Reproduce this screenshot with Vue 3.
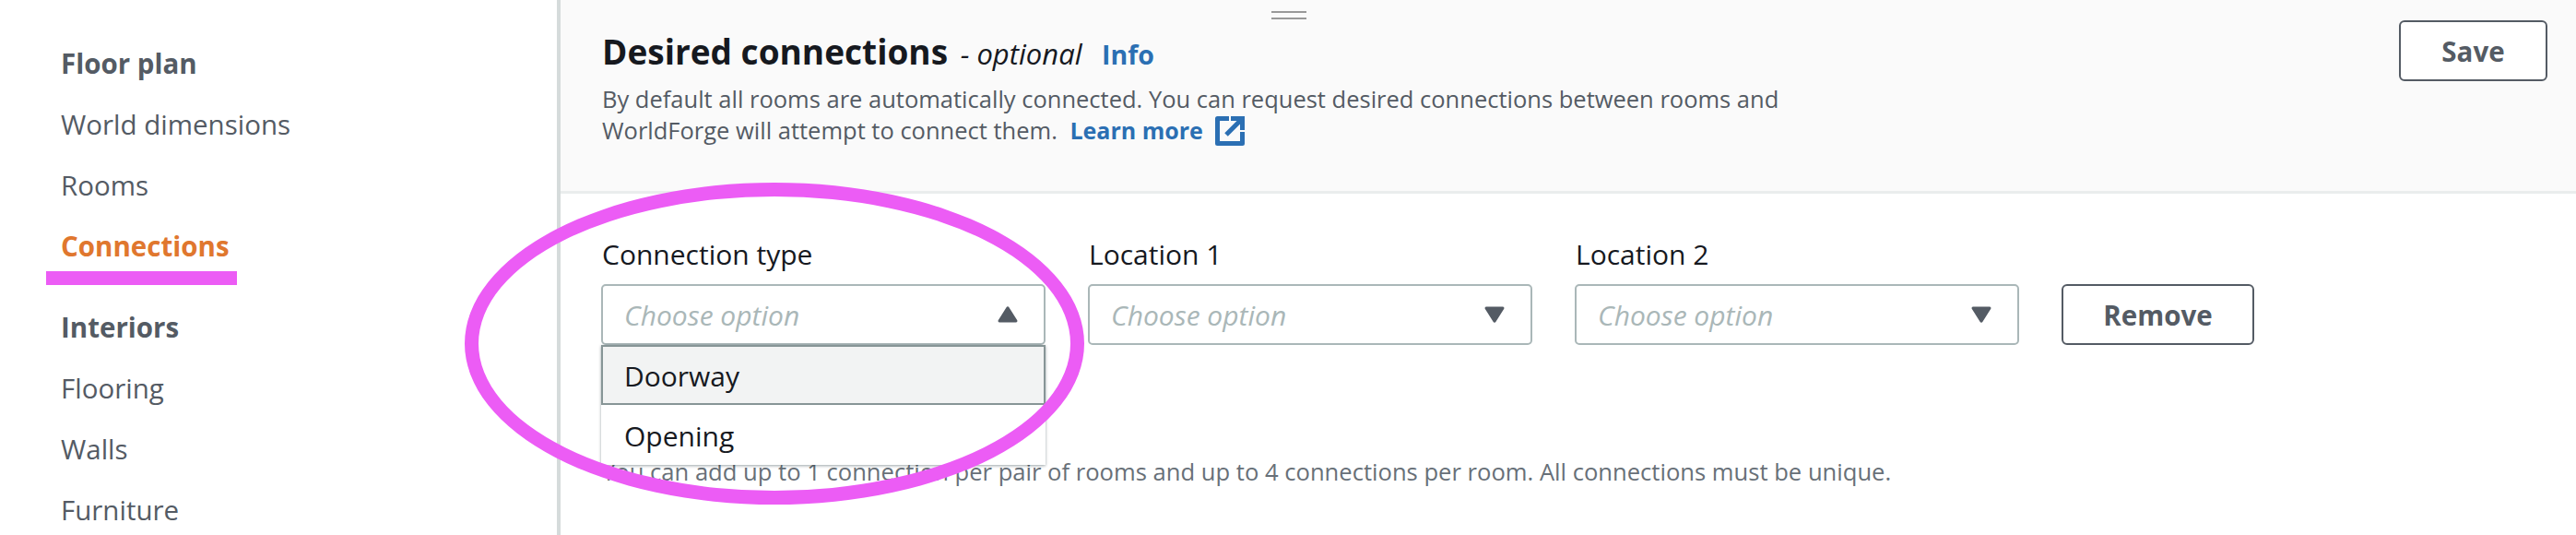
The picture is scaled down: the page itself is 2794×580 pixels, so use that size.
<script setup>
const sections = [
  { title: 'Floor plan', items: ['World dimensions', 'Rooms', 'Connections'] },
  { title: 'Interiors', items: ['Flooring', 'Walls', 'Furniture'] }
]
const fields = [
  { label: 'Connection type', open: true },
  { label: 'Location 1', open: false },
  { label: 'Location 2', open: false }
]
</script>

<template>
  <div class="page">
    <aside class="side">
      <section v-for="s in sections" :key="s.title" class="group">
        <div class="nav title">{{ s.title }}</div>
        <div v-for="i in s.items" :key="i" class="nav" :class="{ active: i === 'Connections' }">
          {{ i }}
          <span v-if="i === 'Connections'" class="underline"></span>
        </div>
      </section>
    </aside>
    <main class="main">
      <span class="grip"></span>
      <header class="head">
        <div class="head-text">
          <h1>Desired connections <i>- optional</i> <a class="info">Info</a></h1>
          <p>By default all rooms are automatically connected. You can request desired connections between rooms and<br>WorldForge will attempt to connect them. <a class="learn">Learn more
            <svg class="ext" viewBox="0 0 32 32" fill="none" stroke="#2b6fb3" stroke-width="5"><path d="M15 2.500H2.500v27h27V17" stroke-linejoin="round"/><path d="M17 2.500h12.500V15M29.500 2.500 12 20"/></svg></a></p>
        </div>
        <button class="btn save">Save</button>
      </header>
      <div class="form">
        <div class="row">
          <div v-for="f in fields" :key="f.label" class="field">
            <label>{{ f.label }}</label>
            <div class="select">
              <em>Choose option</em>
              <svg class="caret" :class="{ up: f.open }" viewBox="0 0 24 20"><path d="M3 1.500h18a1.500 1.500 0 0 1 1.300 2.200L13.300 18a1.500 1.500 0 0 1-2.600 0L1.700 3.700A1.500 1.500 0 0 1 3 1.500z" fill="#545b64"/></svg>
              <ul v-if="f.open" class="menu">
                <li class="hover">Doorway</li>
                <li>Opening</li>
              </ul>
            </div>
          </div>
          <button class="btn remove">Remove</button>
        </div>
        <p class="help">You can add up to 1 connection per pair of rooms and up to 4 connections per room. All connections must be unique.</p>
      </div>
    </main>
    <span class="ring"></span>
  </div>
</template>

<style>
html, body { margin: 0; background: #fff; overflow: hidden; }
</style>

<style scoped>
.page { position: relative; display: flex; width: 2794px; height: 580px; overflow: hidden; font-family: "Open Sans", sans-serif; color: #16191f; }
.side { width: 604px; flex: none; padding-top: 36px; box-sizing: border-box; }
.group { margin-bottom: 22px; }
.nav { position: relative; height: 66px; line-height: 66px; padding-left: 66px; font-size: 29.5px; color: #545b64; }
.title { font-weight: 700; }
.active { color: #e0772e; font-weight: 700; }
.underline { position: absolute; left: 50px; top: 60px; width: 207px; height: 15px; background: #ec5cf5; }
.main { position: relative; flex: 1; border-left: 4px solid #d5dbdb; }
.grip { position: absolute; left: 771px; top: 12px; width: 38px; height: 5px; border-top: 2px solid #999; border-bottom: 2px solid #999; }
.head { display: flex; justify-content: space-between; box-sizing: border-box; height: 210px; padding: 22px 31px 0 45px; background: #fafafa; border-bottom: 3px solid #eaeded; }
.head-text { padding-top: 4px; }
h1 { margin: 0; font-size: 37px; line-height: 60px; font-weight: 700; }
h1 i { font-size: 31px; font-weight: 400; margin-left: 4px; }
.info { font-size: 28.500px; color: #2b6fb3; font-weight: 700; margin-left: 12px; }
.head-text p { margin: 0; padding-top: 1px; font-size: 25.500px; line-height: 34px; color: #545b64; }
.learn { margin-left: 7px; font-size: 25px; color: #2b6fb3; font-weight: 700; }
.ext { width: 32px; height: 32px; vertical-align: -7px; margin-left: 7px; }
.btn { box-sizing: border-box; height: 66px; background: #fff; border: 2px solid #545b64; border-radius: 6px; font: 700 29.500px "Open Sans", sans-serif; color: #545b64; }
.save { width: 161px; }
.form { padding: 47px 0 0 44px; }
.row { display: flex; align-items: flex-end; }
.field { position: relative; width: 482px; margin-right: 46px; }
label { display: block; margin-left: 1px; font-size: 30px; line-height: 38px; margin-bottom: 13px; color: #16191f; }
.select { position: relative; display: flex; align-items: center; justify-content: space-between; box-sizing: border-box; height: 66px; padding: 0 27px 0 23px; border: 2px solid #aab7b8; border-radius: 5px; }
.select em { font-size: 30px; line-height: 34px; padding-top: 2px; color: #aab7b8; }
.caret { width: 24px; height: 20px; }
.caret.up { transform: rotate(180deg); }
.menu { position: absolute; z-index: 2; left: -2px; right: -2px; top: 64px; margin: 0; padding: 0; list-style: none; background: #fff; box-shadow: 0 1px 3px rgba(0, 28, 36, .4); }
.menu li { box-sizing: border-box; height: 65px; line-height: 64px; padding-left: 23px; font-size: 30px; border: 2px solid transparent; }
.menu .hover { background: #f2f3f3; border-color: #879596; }
.remove { width: 209px; }
.help { margin: 120px 0 0 1px; font-size: 25.600px; line-height: 36px; color: #687078; }
.ring { position: absolute; z-index: 3; left: 504px; top: 198px; width: 672px; height: 349px; box-sizing: border-box; border: 15px solid #ec5cf5; border-radius: 50%; }
</style>
